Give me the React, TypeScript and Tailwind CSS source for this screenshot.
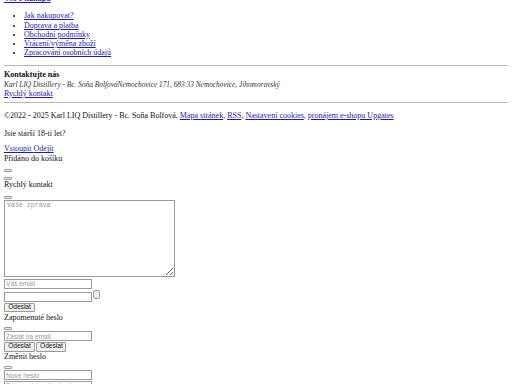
const link = "text-[#1c1cb4] underline";
const input =
  "block h-[10px] w-[88px] border border-[#9a9a9a] bg-white px-[1px] font-['Liberation_Sans',Arial,sans-serif] text-[6.6px] leading-none text-[#222] placeholder:text-[#9a9a9a] outline-none";
const btn =
  "block h-[9.5px] rounded-[1px] border border-[#9a9a9a] bg-[#efefef] px-[3px] font-['Liberation_Sans',Arial,sans-serif] text-[6.6px] leading-none text-[#111]";
const tiny = "block h-[3px] w-[8px] rounded-[1px] border border-[#9a9a9a] bg-[#efefef]";

const shopLinks = [
  "Jak nakupovat?",
  "Doprava a platba",
  "Obchodní podmínky",
  "Vrácení/výměna zboží",
  "Zpracování osobních údajů",
];

export default function App() {
  return (
    <div className="h-[384px] w-[512px] overflow-hidden bg-white px-[4px] font-['Liberation_Serif','Times_New_Roman',serif] text-[8px] leading-[9.2px] text-[#111]">
      <div className="mt-[-5.8px]">
        <a href="#" className={`${link} font-bold`}>Vše o nákupu</a>
      </div>
      <ul className="my-[8px] list-disc pl-[20px]">
        {shopLinks.map((t) => (
          <li key={t}>
            <a href="#" className={link}>{t}</a>
          </li>
        ))}
      </ul>
      <div className="h-[1px] border-t border-[#b8b8b8]" />

      <div className="mt-[4px]">
        <div className="font-bold">Kontaktujte nás</div>
        <div className="text-[7.35px] italic text-[#333]">
          Karl LIQ Distillery - Bc. Soňa BolfováNemochovice 171, 683 33 Nemochovice, Jihomoravský
        </div>
        <a href="#" className={link}>Rychlý kontakt</a>
      </div>
      <div className="mt-[4px] h-[1px] border-t border-[#b8b8b8]" />

      <p className="mt-[8px]">
        ©2022 - 2025 Karl LIQ Distillery - Bc. Soňa Bolfová,{" "}
        <a href="#" className={link}>Mapa stránek</a>,{" "}
        <a href="#" className={link}>RSS</a>,{" "}
        <a href="#" className={link}>Nastavení cookies</a>,{" "}
        <a href="#" className={link}>pronájem e-shopu Upgates</a>
      </p>

      <p className="mt-[9px]">Jste starší 18-ti let?</p>
      <div className="mt-[6px]">
        <a href="#" className={link}>Vstoupit </a>
        <a href="#" className={link}>Odejít</a>
      </div>
      <div>Přidáno do košíku</div>

      <button className={`${tiny} mt-[6px]`} />
      <button className={`${tiny} mt-[5.5px]`} />
      <div>Rychlý kontakt</div>
      <button className={`${tiny} mt-[6.5px]`} />

      <textarea
        placeholder="Vaše zpráva"
        className="mt-[0.5px] block h-[77px] w-[171px] border border-[#9a9a9a] px-[2px] py-[1px] font-['Liberation_Mono','Courier_New',monospace] text-[6.6px] leading-[8px] placeholder:text-[#9a9a9a] outline-none"
      />
      <input placeholder="Váš email" className={`${input} mt-[2px]`} />
      <div className="mt-[1.4px] flex items-start">
        <input className={`${input} mt-[2.3px]`} />
        <button className="ml-[1px] block h-[9.5px] w-[7px] rounded-[2px] border border-[#9a9a9a] bg-[#efefef]" />
      </div>
      <button className={`${btn} mt-[0.7px] w-[31px]`}>Odeslat</button>
      <div className="mt-[0.4px]">Zapomenuté heslo</div>

      <button className={`${tiny} mt-[5px]`} />
      <input placeholder="Zaslat na email" className={`${input} mt-[1.3px]`} />
      <div className="mt-[0.7px] flex gap-[1px]">
        <button className={`${btn} w-[31px]`}>Odeslat</button>
        <button className={`${btn} w-[30px]`}>Odeslat</button>
      </div>
      <div className="mt-[0.4px]">Změnit heslo</div>

      <button className={`${tiny} mt-[4.7px]`} />
      <input placeholder="Nové heslo" className={`${input} mt-[1.3px]`} />
      <input placeholder="Potvrzení nového hesla" className={`${input} mt-[0.7px]`} />
    </div>
  );
}
